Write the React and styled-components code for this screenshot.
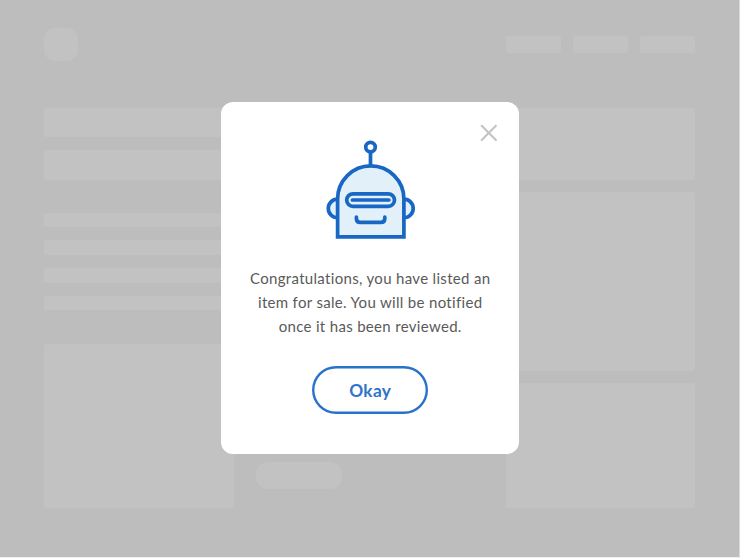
import React from "react";
import styled, { createGlobalStyle } from "styled-components";

const GlobalStyle = createGlobalStyle`
  *, *::before, *::after { box-sizing: border-box; }
  body { margin: 0; overflow: hidden; font-family: Lato, sans-serif; }
`;

const Page = styled.div`
  position: relative;
  width: 740px;
  height: 558px;
  padding: 27.5px 44.4px 0;
  background: #bdbdbd;
  border-right: 1px solid #d9d9d9;
  border-bottom: 1px solid #f0f0f0;
`;

const Header = styled.header`
  display: flex;
  align-items: center;
  justify-content: space-between;
  height: 33.5px;
`;

const Nav = styled.nav`
  display: flex;
  gap: 12px;
`;

const Block = styled.div`
  width: ${(p) => (p.$w ? `${p.$w}px` : "auto")};
  height: ${(p) => p.$h}px;
  border-radius: ${(p) => p.$r ?? 2}px;
  background: #c2c2c2;
`;

const Columns = styled.main`
  display: grid;
  grid-template-columns: 189.4px 1fr 189.5px;
  column-gap: 22px;
  height: 400.5px;
  margin-top: 46.5px;
  margin-right: -0.5px;
`;

const Column = styled.div`
  display: flex;
  flex-direction: column;
  gap: ${(p) => p.$gap}px;
`;

const Lines = styled.div`
  display: flex;
  flex-direction: column;
  gap: 13px;
  margin: 20.5px 0 21px;
`;

const Center = styled.div`
  display: flex;
  align-items: flex-end;
  padding-bottom: 19px;
`;

const Overlay = styled.div`
  position: absolute;
  inset: 102px 0 0;
  display: flex;
  justify-content: center;
  align-items: flex-start;
`;

const Dialog = styled.section`
  position: relative;
  display: flex;
  flex-direction: column;
  align-items: center;
  width: 298.4px;
  height: 352.3px;
  margin-left: 1.4px;
  padding-top: 36px;
  border-radius: 12px;
  background: #fff;
`;

const CloseButton = styled.button`
  position: absolute;
  top: 20px;
  right: 20px;
  width: 22px;
  height: 22px;
  padding: 0;
  border: 0;
  background: none;
  color: #c4c4c4;

  svg { display: block; }
`;

const Robot = styled.svg`
  display: block;
  flex: none;
`;

const Message = styled.p`
  margin: 24.2px 0 0;
  color: #5a5a5a;
  font-size: 15px;
  line-height: 24px;
  letter-spacing: 0.32px;
  text-align: center;
  white-space: nowrap;
`;

const OkayButton = styled.button`
  width: 116px;
  height: 48px;
  margin-top: 27.8px;
  padding: 1px 0 0;
  border: 0;
  box-shadow: inset 0 0 0 2.4px #2872cb;
  border-radius: 24px;
  background: #fff;
  color: #2f74ca;
  font: 700 17.3px Lato, sans-serif;
  letter-spacing: 0.3px;
`;

function RobotIcon() {
  return (
    <Robot width="100" height="104" viewBox="320 138 100 104" fill="none" stroke="#1967c4" strokeWidth="3.7">
      <path d="M337.6 199.1a9.3 9.3 0 0 0 0 18.6M403.9 199.1a9.3 9.3 0 0 1 0 18.6" fill="#e1f0f9" />
      <path d="M337.6 236.9V199a33.15 33.15 0 0 1 66.3 0v37.9Z" fill="#e1f0f9" />
      <path d="M370.5 152v13" />
      <circle cx="370.5" cy="147.1" r="4.8" fill="#fff" />
      <rect x="346.7" y="193.8" width="47.8" height="12.6" rx="6.3" />
      <path d="M352.4 200h36.5M356.4 217.2v1.2q0 4 4 4h20.4q4 0 4-4v-1.2" strokeLinecap="round" />
    </Robot>
  );
}

export default function App() {
  return (
    <>
      <GlobalStyle />
      <Page>
        <Header>
          <Block $w={33.5} $h={33.5} $r={11} />
          <Nav>
            <Block $w={55} $h={16.5} />
            <Block $w={55} $h={16.5} />
            <Block $w={55} $h={16.5} />
          </Nav>
        </Header>
        <Columns>
          <Column $gap={12.5}>
            <Block $h={29.5} />
            <Block $h={30} />
            <Lines>
              <Block $h={14.7} />
              <Block $h={14.7} />
              <Block $h={14.7} />
              <Block $h={14.7} />
            </Lines>
            <Block $h={164} />
          </Column>
          <Center>
            <Block $w={86} $h={27.3} $r={12} />
          </Center>
          <Column $gap={12.2}>
            <Block $h={72.5} />
            <Block $h={178.5} />
            <Block $h={125} />
          </Column>
        </Columns>
        <Overlay>
          <Dialog role="dialog" aria-label="Item listed">
            <CloseButton aria-label="Close">
              <svg width="22" height="22" viewBox="0 0 22 22" fill="none" stroke="currentColor" strokeWidth="2.1" strokeLinecap="round">
                <path d="m4.7 3.8 14.2 14.2M18.9 3.8 4.7 18" />
              </svg>
            </CloseButton>
            <RobotIcon />
            <Message>
              Congratulations, you have listed an<br />
              item for sale. You will be notified<br />
              once it has been reviewed.
            </Message>
            <OkayButton>Okay</OkayButton>
          </Dialog>
        </Overlay>
      </Page>
    </>
  );
}
